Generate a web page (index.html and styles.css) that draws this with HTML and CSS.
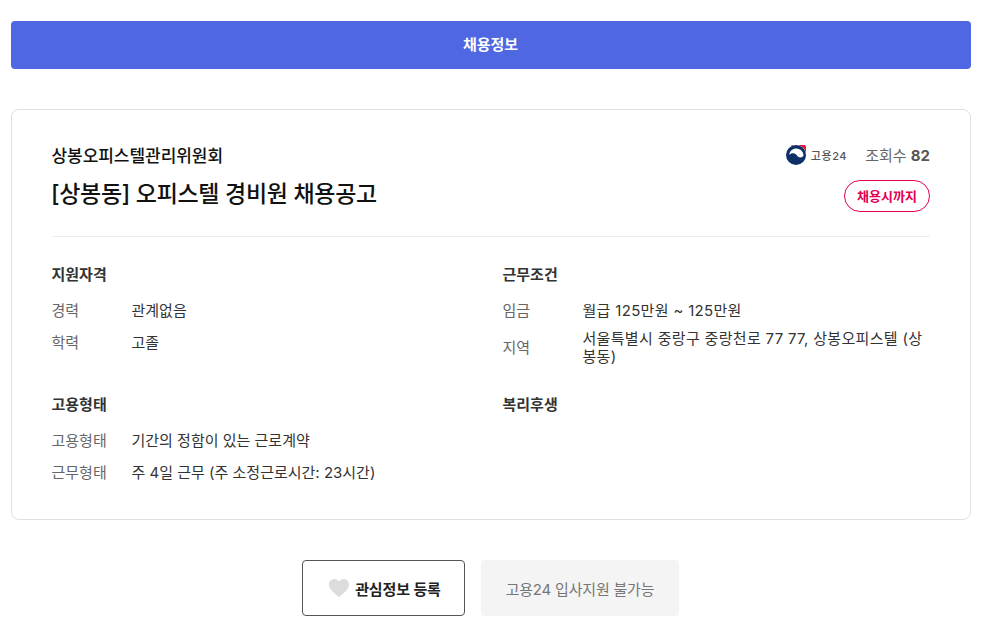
FILE: index.html
```html
<!DOCTYPE html>
<html lang="ko">
<head>
<meta charset="utf-8">
<title>채용정보</title>
<link rel="stylesheet" href="styles.css">
</head>
<body>
<main class="page">
  <h1 class="banner">채용정보</h1>
  <section class="card">
    <header class="head">
      <div class="head-left">
        <div class="company">상봉오피스텔관리위원회</div>
        <h2 class="title">[상봉동] 오피스텔 경비원 채용공고</h2>
      </div>
      <div class="head-right">
        <div class="meta">
          <span class="logo">
            <svg class="logo-mark" viewBox="0 0 20 20" width="20" height="20">
              <circle cx="10" cy="10" r="10" fill="#0b2f66"/>
              <path d="M5 1.300A10 10 0 0 1 20 10.500 8.800 8.800 0 0 0 5 1.300z" fill="#d8173a"/>
              <path d="M3.200 10C3.600 5.600 7 3.400 10.500 3.500 14.600 3.700 17.400 6.800 17.600 10.500 16.400 12.900 12.600 13.200 10.800 10.200 9.200 7.600 5 7.400 3.200 10z" fill="#fff"/>
            </svg>
            <span class="logo-text">고용24</span>
          </span>
          <span class="views">조회수 <b>82</b></span>
        </div>
        <span class="badge">채용시까지</span>
      </div>
    </header>
    <div class="grid">
      <div class="group">
        <h3 class="group-title">지원자격</h3>
        <dl class="rows">
          <div class="row"><dt>경력</dt><dd>관계없음</dd></div>
          <div class="row"><dt>학력</dt><dd>고졸</dd></div>
        </dl>
      </div>
      <div class="group group-wide">
        <h3 class="group-title">근무조건</h3>
        <dl class="rows">
          <div class="row"><dt>임금</dt><dd>월급 125만원 ~ 125만원</dd></div>
          <div class="row"><dt>지역</dt><dd>서울특별시 중랑구 중랑천로 77 77, 상봉오피스텔 (상봉동)</dd></div>
        </dl>
      </div>
      <div class="group">
        <h3 class="group-title">고용형태</h3>
        <dl class="rows">
          <div class="row"><dt>고용형태</dt><dd>기간의 정함이 있는 근로계약</dd></div>
          <div class="row"><dt>근무형태</dt><dd>주 4일 근무 (주 소정근로시간: 23시간)</dd></div>
        </dl>
      </div>
      <div class="group">
        <h3 class="group-title">복리후생</h3>
      </div>
    </div>
  </section>
  <div class="actions">
    <button class="btn btn-outline" type="button">
      <svg class="heart" viewBox="0 0 20 18" width="20" height="18"><path d="M10 18C3 12.500 0 9.500 0 5.500 0 2.300 2.400 0 5.400 0 7.200 0 9 .9 10 2.400 11 .9 12.800 0 14.600 0 17.600 0 20 2.300 20 5.500 20 9.500 17 12.500 10 18z" fill="#dcdcdc"/></svg>
      관심정보 등록
    </button>
    <button class="btn btn-disabled" type="button">고용24 입사지원 불가능</button>
  </div>
</main>
</body>
</html>
```

FILE: styles.css
```css
* { box-sizing: border-box; }
html, body { margin: 0; padding: 0; background: #fff; }
body {
  font-family: Inter, "Noto Sans CJK KR", "Noto Sans", sans-serif;
  color: #222;
  overflow: hidden;
}
.page { width: 960px; margin-left: 11px; padding-top: 21px; }
.banner {
  margin: 0;
  height: 48px;
  line-height: 48px;
  padding-right: 1px;
  background: #4f67e2;
  border-radius: 4px;
  color: #fff;
  font-size: 15px;
  font-weight: 700;
  text-align: center;
}
.card {
  margin-top: 40px;
  height: 411px;
  border: 1px solid #e0e0e0;
  border-radius: 8px;
  padding: 32px 40px 0 39.5px;
}
.head {
  display: flex;
  justify-content: space-between;
  height: 95px;
  border-bottom: 1px solid #ececec;
}
.company { margin-top: 2px; font-size: 17px; font-weight: 500; line-height: 24px; letter-spacing: -.05px; color: #111; }
.title { margin: 11px 0 0 -.5px; font-size: 23px; font-weight: 500; line-height: 30px; letter-spacing: -.3px; color: #111; }
.head-right { display: flex; flex-direction: column; align-items: flex-end; }
.meta { display: flex; align-items: center; height: 24px; }
.logo { display: flex; align-items: center; gap: 5px; margin-top: 2px; }
.logo-mark { display: block; }
.logo-text { font-size: 11px; font-weight: 500; color: #555; letter-spacing: .6px; }
.views { margin-left: 18px; font-size: 15px; color: #666; }
.views b { font-weight: 700; color: #555; }
.badge {
  margin-top: 14px;
  width: 86px;
  height: 32px;
  line-height: 30px;
  border: 1px solid #e5004f;
  border-radius: 16px;
  color: #e5004f;
  font-size: 13px;
  font-weight: 700;
  text-align: center;
}
.grid { display: grid; grid-template-columns: 451px 427px; }
.group { height: 130px; padding-top: 26px; }
.group-title { margin: 0 0 7px; font-size: 15px; font-weight: 700; line-height: 24px; color: #333; }
.rows { margin: 0; }
.row { display: flex; align-items: center; min-height: 32px; }
.row dt { flex: 0 0 80px; padding-bottom: 2px; font-size: 15px; color: #666; }
.row dd { margin: 0; padding: 4px 0 2px; font-size: 15px; line-height: 18px; color: #333; }
.group-wide .row dd { letter-spacing: .32px; }
.actions { display: flex; justify-content: center; gap: 16px; margin-top: 40px; padding-right: 1px; }
.btn {
  height: 56px;
  border-radius: 4px;
  font-family: inherit;
  font-size: 15px;
  display: flex;
  align-items: center;
  justify-content: center;
}
.btn-outline {
  width: 163px;
  padding: 0 0 0 3px;
  background: #fff;
  border: 1px solid #555;
  color: #222;
  font-weight: 700;
  letter-spacing: -.1px;
  gap: 6px;
}
.btn-disabled {
  width: 198px;
  background: #f4f4f4;
  border: 0;
  color: #777;
  letter-spacing: -.2px;
}
```
